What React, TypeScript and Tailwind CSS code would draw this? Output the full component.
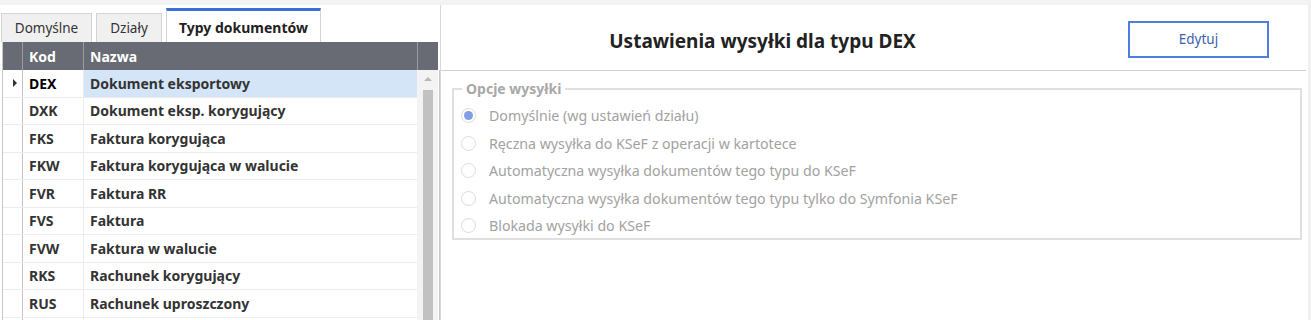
import React from "react";

const rows: [string, string][] = [
  ["DEX", "Dokument eksportowy"],
  ["DXK", "Dokument eksp. korygujący"],
  ["FKS", "Faktura korygująca"],
  ["FKW", "Faktura korygująca w walucie"],
  ["FVR", "Faktura RR"],
  ["FVS", "Faktura"],
  ["FVW", "Faktura w walucie"],
  ["RKS", "Rachunek korygujący"],
  ["RUS", "Rachunek uproszczony"],
  ["", ""],
];

const options = [
  "Domyślnie (wg ustawień działu)",
  "Ręczna wysyłka do KSeF z operacji w kartotece",
  "Automatyczna wysyłka dokumentów tego typu do KSeF",
  "Automatyczna wysyłka dokumentów tego typu tylko do Symfonia KSeF",
  "Blokada wysyłki do KSeF",
];

export default function App() {
  return (
    <div
      className="w-[1311px] h-[320px] overflow-hidden bg-white flex"
      style={{ fontFamily: '"Noto Sans", "Open Sans", sans-serif' }}
    >
      <div className="flex-1 flex flex-col">
        <div className="h-[5px] bg-[#f3f3f3] shrink-0" />
        <div className="flex flex-1 min-h-0">
          {/* Left panel */}
          <div className="w-[440px] shrink-0 flex flex-col">
            <div className="flex items-end h-[37px] pl-[1px] gap-[4px]">
              <div className="h-[29px] w-[91px] border border-b-0 border-[#d4d4d4] bg-[#f0f0f0] flex items-center justify-center text-[13.5px] text-[#333]">
                Domyślne
              </div>
              <div className="h-[29px] w-[66px] border border-b-0 border-[#d4d4d4] bg-[#f0f0f0] flex items-center justify-center text-[13.5px] text-[#333]">
                Działy
              </div>
              <div className="h-[34px] w-[155px] border-t-[3px] border-t-[#3a6fd8] border-x border-x-[#d4d4d4] bg-white flex items-center justify-center text-[14px] font-bold text-[#222] pt-[1px]">
                Typy dokumentów
              </div>
            </div>
            <div className="flex flex-1 min-h-0 ml-[2px] border-l border-[#c8c8c8]">
              <div className="flex flex-col w-[415px]">
                <div className="flex h-[28px] bg-[#686b74] text-white text-[14px] font-bold shrink-0">
                  <div className="w-[20px] border-r border-[#9a9ca3]" />
                  <div className="w-[61px] border-r border-[#9a9ca3] flex items-center pl-[6px]">Kod</div>
                  <div className="flex-1 flex items-center pl-[6px]">Nazwa</div>
                </div>
                {rows.map(([kod, nazwa], i) => (
                  <div key={i} className="flex h-[27.5px] shrink-0 text-[14px] font-bold border-b border-[#ececec]">
                    <div className="w-[20px] border-r border-[#c4c4c4] flex items-center justify-center">
                      {i === 0 && (
                        <svg width="6" height="8" viewBox="0 0 6 8" className="ml-[4px]">
                          <path d="M1 0 L5 4 L1 8 Z" fill="#333" />
                        </svg>
                      )}
                    </div>
                    <div className={`w-[61px] border-r border-[#ececec] flex items-center pl-[6px] ${i === 0 ? "text-black" : "text-[#333]"}`}>
                      {kod}
                    </div>
                    <div className={`flex-1 flex items-center pl-[6px] text-[#333] ${i === 0 ? "bg-[#d4e5f8]" : ""}`}>
                      {nazwa}
                    </div>
                  </div>
                ))}
              </div>
              <div className="flex flex-col w-[21px]">
                <div className="h-[28px] bg-[#686b74] border-l border-[#9a9ca3] shrink-0" />
                <div className="flex-1 bg-[#f3f3f3] flex flex-col items-center">
                  <svg width="8" height="5" viewBox="0 0 8 5" className="mt-[6px]">
                    <path d="M0 5 L4 1 L8 5 Z" fill="#b8b8b8" />
                  </svg>
                  <div className="w-[10px] flex-1 bg-[#c1c1c1] mt-[9px]" />
                </div>
              </div>
              <div className="w-[1px] bg-white" />
              <div className="w-[1px] bg-[#c8c8c8] mt-[28px]" />
            </div>
          </div>

          {/* Right panel */}
          <div className="flex-1 flex flex-col border-l border-[#d8d8d8]">
            <div className="flex h-[66px] shrink-0 border-b border-[#cfcfcf] mr-[2px]">
              <div className="w-[643px] text-center pt-[22px] text-[19px] leading-[28px] font-bold text-[#222]">
                Ustawienia wysyłki dla typu DEX
              </div>
              <div className="ml-[44px] mt-[16px] w-[141px] h-[37px] border-2 border-[#4f7fdc] flex items-center justify-center text-[13.5px] text-[#3d5fa8]">
                Edytuj
              </div>
            </div>
            <fieldset className="ml-[11px] mr-[6px] mt-[9px] border-2 border-[#e0e0e0] pl-[8px] pb-0 m-0">
              <legend className="px-[4px] text-[14px] font-bold text-[#a8a8a8] leading-[18px]">
                Opcje wysyłki
              </legend>
              <div className="flex flex-col gap-[4px] pt-[6px]">
                {options.map((o, i) => (
                  <div key={i} className="flex items-center h-[23.5px]">
                    <div className="ml-[-1px] w-[15px] h-[15px] rounded-full border border-[#dcdcdc] bg-white flex items-center justify-center">
                      {i === 0 && <div className="w-[9px] h-[9px] rounded-full bg-[#7f9ee4]" />}
                    </div>
                    <span className="ml-[13px] text-[14.2px] text-[#a2a2a2]">{o}</span>
                  </div>
                ))}
              </div>
            </fieldset>
          </div>
        </div>
      </div>
      <div className="w-[3px] bg-[#f0f0f0] shrink-0" />
    </div>
  );
}
